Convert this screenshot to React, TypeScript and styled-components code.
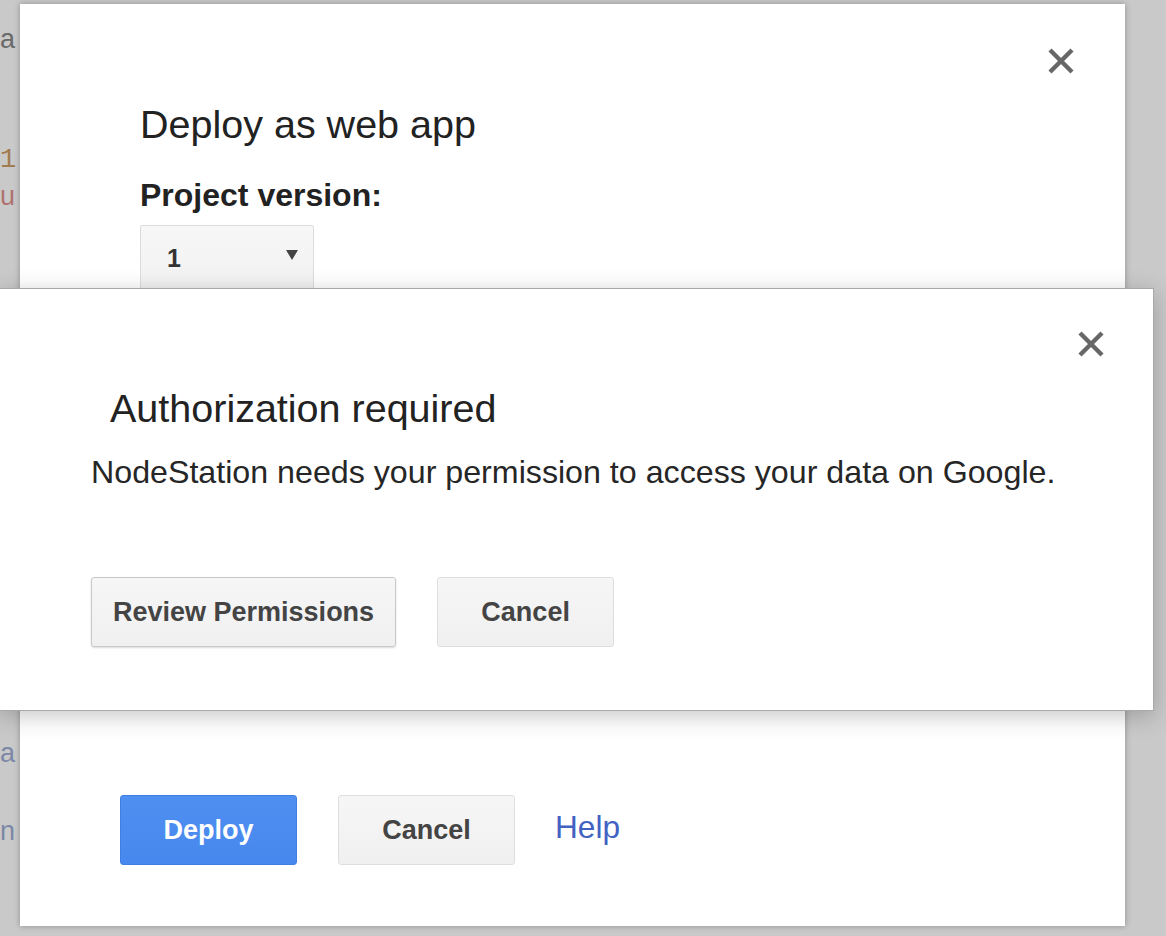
import React from "react";
import styled, { createGlobalStyle } from "styled-components";

const Global = createGlobalStyle`
  html, body { margin: 0; padding: 0; }
  body { background: #c9c9c9; font-family: "Liberation Sans", Arial, sans-serif; }
`;

const Screen = styled.div`
  position: relative;
  width: 1166px;
  height: 936px;
  overflow: hidden;
  background: #c9c9c9;
`;

const Editor = styled.div`
  display: flex;
  flex-direction: column;
`;

const CodeLine = styled.div<{ $gap: number; $color: string; $mono?: boolean }>`
  margin-top: ${(p) => p.$gap}px;
  height: 30px;
  line-height: 30px;
  font-size: 27px;
  color: ${(p) => p.$color};
  font-family: ${(p) =>
    p.$mono ? `"Liberation Mono", "Courier New", monospace` : `"Liberation Sans", Arial, sans-serif`};
  white-space: nowrap;
`;

const BackDialog = styled.div`
  position: absolute;
  left: 20px;
  top: 4px;
  width: 1105px;
  height: 922px;
  box-sizing: border-box;
  background: #fff;
  box-shadow: 0 0 6px rgba(0, 0, 0, 0.3);
  display: flex;
  flex-direction: column;
  padding: 98px 0 61px 120px;
`;

const FrontDialog = styled.div`
  position: absolute;
  left: -1px;
  top: 288px;
  width: 1155px;
  height: 423px;
  box-sizing: border-box;
  background: #fff;
  border: 1px solid #a9a9a9;
  box-shadow: 0 5px 22px rgba(0, 0, 0, 0.22);
  display: flex;
  flex-direction: column;
  padding: 97px 0 63px 91px;
`;

const CloseButton = styled.button<{ $right: number; $top: number }>`
  position: absolute;
  right: ${(p) => p.$right}px;
  top: ${(p) => p.$top}px;
  width: 30px;
  height: 30px;
  padding: 0;
  border: 0;
  background: transparent;
  display: flex;
  align-items: center;
  justify-content: center;
  cursor: pointer;
`;

const Title = styled.h1<{ $indent?: number }>`
  margin: 0;
  padding-left: ${(p) => p.$indent ?? 0}px;
  font-family: "Liberation Sans", Arial, sans-serif;
  font-weight: 400;
  font-size: 39.5px;
  line-height: 1.15;
  color: #222;
`;

const Label = styled.div`
  margin-top: 30px;
  font-weight: 700;
  font-size: 32px;
  line-height: 1.15;
  color: #222;
`;

const Select = styled.div`
  margin-top: 11px;
  width: 174px;
  height: 70px;
  box-sizing: border-box;
  border: 1px solid #dcdcdc;
  border-radius: 2px;
  background: linear-gradient(#f7f7f7, #f1f1f1);
  display: flex;
  align-items: center;
  justify-content: space-between;
  padding: 0 15px 4px 26px;
  font-weight: 700;
  font-size: 25px;
  color: #333;
`;

const Caret = styled.span`
  width: 0;
  height: 0;
  border-left: 6px solid transparent;
  border-right: 6px solid transparent;
  border-top: 10px solid #444;
  margin-top: -6px;
`;

const Body = styled.p`
  margin: 23px 0 0;
  font-size: 32.2px;
  line-height: 1.15;
  color: #262626;
`;

const ButtonRow = styled.div<{ $shift?: number }>`
  margin-left: ${(p) => p.$shift ?? 0}px;
  display: flex;
  align-items: center;
  gap: 41px;
`;

const ActionRow = styled(ButtonRow)`
  margin-top: 86px;
`;

const Footer = styled(ButtonRow)`
  margin-top: auto;
`;

const Button = styled.button<{ $primary?: boolean; $focused?: boolean }>`
  height: 70px;
  min-width: 177px;
  box-sizing: border-box;
  padding: 0 21px;
  border-radius: 3px;
  font-family: "Liberation Sans", Arial, sans-serif;
  font-weight: 700;
  font-size: 27px;
  cursor: pointer;
  color: ${(p) => (p.$primary ? "#fff" : "#444")};
  background: ${(p) =>
    p.$primary ? "linear-gradient(#4f8ff2, #4788ee)" : "linear-gradient(#f6f6f6, #f0f0f0)"};
  border: 1px solid
    ${(p) => (p.$primary ? "#3f7fe4" : p.$focused ? "#c8c8c8" : "#dedede")};
  box-shadow: ${(p) => (p.$focused ? "0 1px 2px rgba(0,0,0,0.15)" : "none")};
`;

const HelpLink = styled.a`
  margin-left: -1px;
  font-size: 31.6px;
  color: #4262c2;
  text-decoration: none;
  padding-bottom: 6px;
`;

const CloseIcon = () => (
  <svg width="28" height="28" viewBox="0 0 28 28">
    <path d="M3 3 L25 25 M25 3 L3 25" stroke="#676767" strokeWidth="4.4" strokeLinecap="butt" />
  </svg>
);

export default function App() {
  return (
    <>
      <Global />
      <Screen>
        <Editor>
          <CodeLine $gap={24} $color="#6a6a6a">a</CodeLine>
          <CodeLine $gap={91} $color="#a27b50" $mono>1</CodeLine>
          <CodeLine $gap={6} $color="#b07272">u</CodeLine>
          <CodeLine $gap={527} $color="#7c88a6">a</CodeLine>
          <CodeLine $gap={48} $color="#7c88a6">n</CodeLine>
        </Editor>

        <BackDialog>
          <CloseButton $right={49} $top={42} aria-label="Close">
            <CloseIcon />
          </CloseButton>
          <Title>Deploy as web app</Title>
          <Label>Project version:</Label>
          <Select>
            <span>1</span>
            <Caret />
          </Select>
          <Footer $shift={-20}>
            <Button $primary>Deploy</Button>
            <Button>Cancel</Button>
            <HelpLink href="#">Help</HelpLink>
          </Footer>
        </BackDialog>

        <FrontDialog>
          <CloseButton $right={47} $top={40} aria-label="Close">
            <CloseIcon />
          </CloseButton>
          <Title $indent={19}>Authorization required</Title>
          <Body>NodeStation needs your permission to access your data on Google.</Body>
          <ActionRow>
            <Button $focused>Review Permissions</Button>
            <Button>Cancel</Button>
          </ActionRow>
        </FrontDialog>
      </Screen>
    </>
  );
}
